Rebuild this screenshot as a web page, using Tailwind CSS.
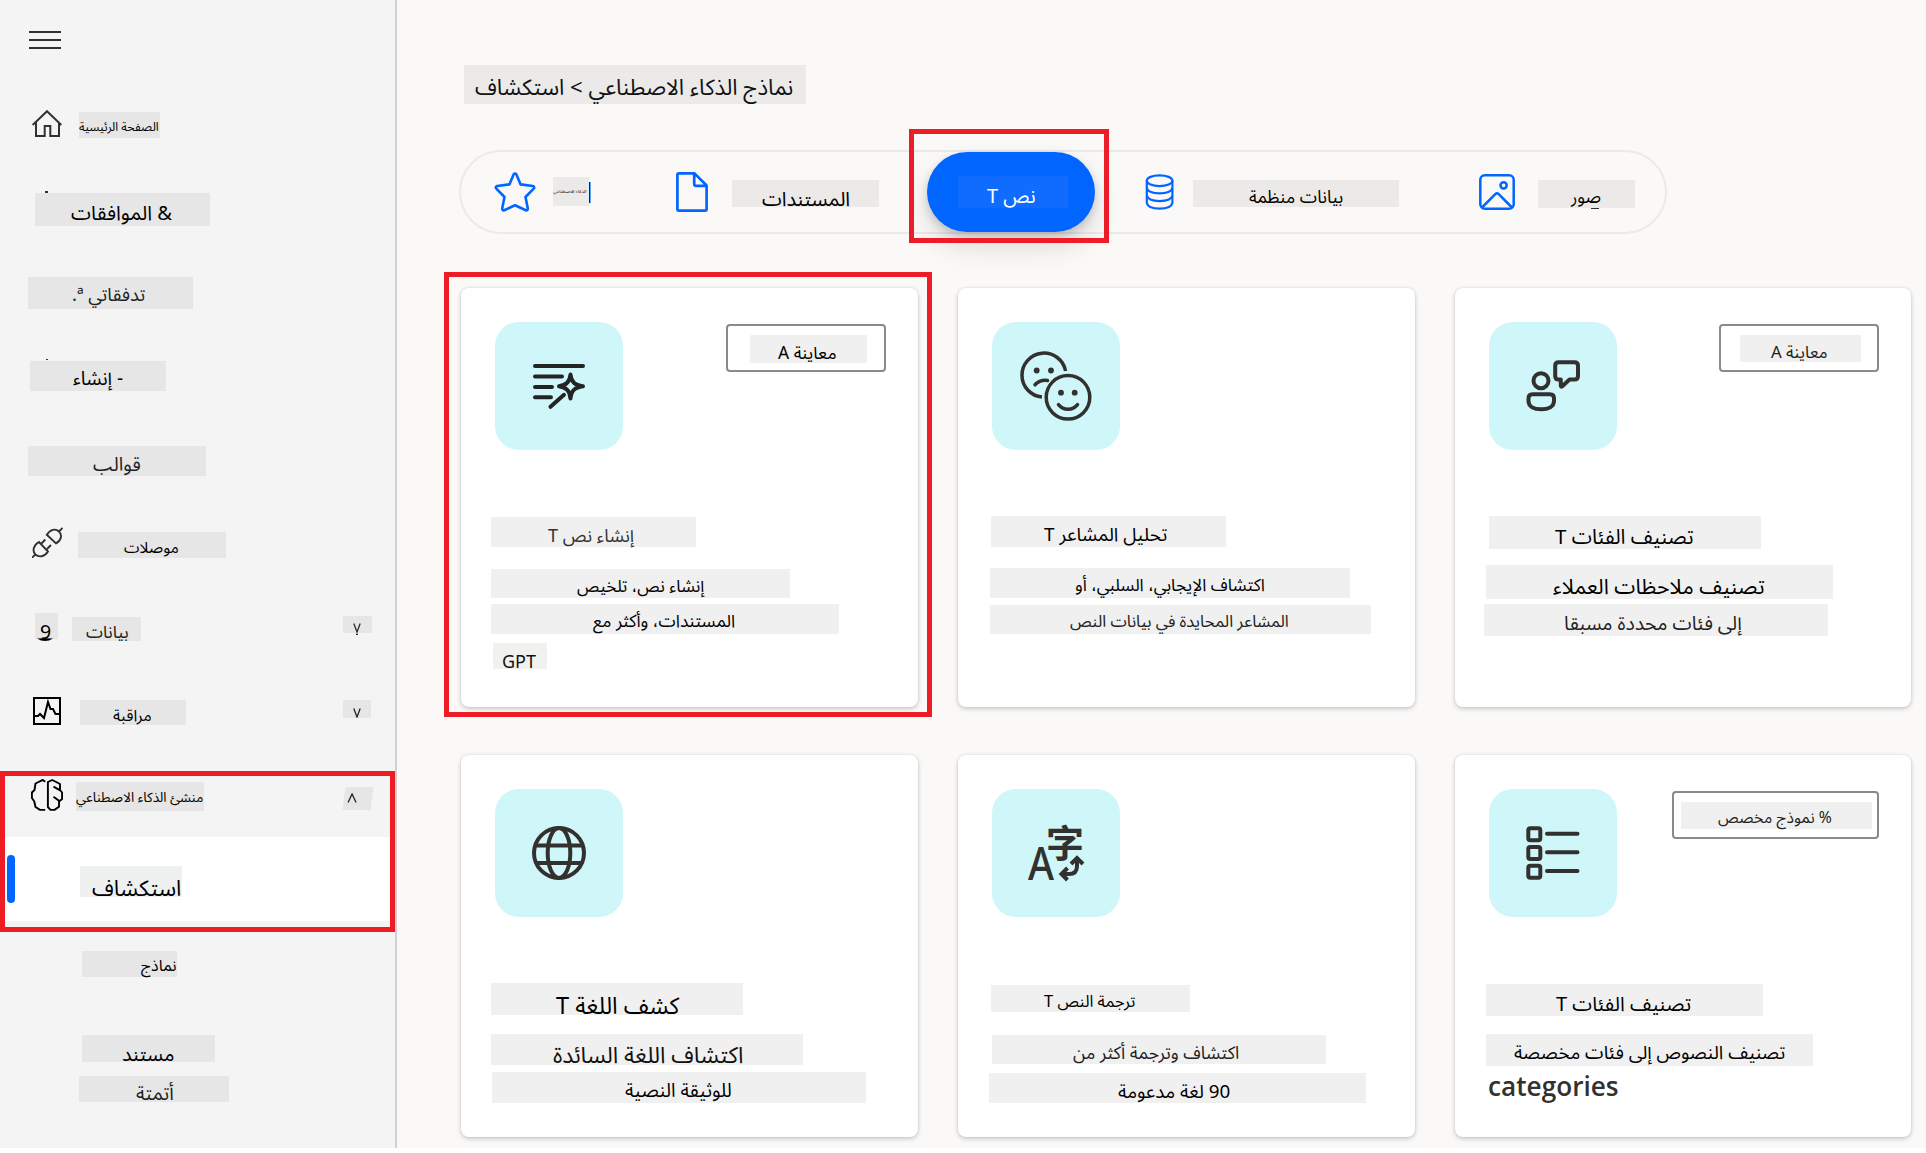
<!DOCTYPE html>
<html lang="ar">
<head>
<meta charset="utf-8">
<title>AI Builder</title>
<script src="https://cdn.jsdelivr.net/npm/@tailwindcss/browser@4"></script>
</head>
<body class="flex h-[1153px] overflow-hidden bg-white font-['Noto_Sans_Arabic','Noto_Sans',sans-serif] leading-none whitespace-nowrap text-black">

<!-- Sidebar -->
<nav class="flex h-[1148px] w-[397px] shrink-0 flex-col items-start border-r-2 border-[#d0d0d0] bg-[#f4f4f4]">
  <div class="mt-[31px] ml-[29px] flex w-8 flex-col gap-1.5">
    <div class="h-0.5 bg-[#323130]"></div><div class="h-0.5 bg-[#323130]"></div><div class="h-0.5 bg-[#323130]"></div>
  </div>

  <div class="mt-[61px] ml-8 flex h-7 items-start">
    <svg class="h-7 w-[30px]" viewBox="32 110 30 28" fill="none" stroke="#323130" stroke-width="2"><path d="M32.6 125 47 111.200 61.400 125M36 122.500V136H44.700V126H50.300V136H59V122.500"/></svg>
    <div class="mt-0.5 ml-[17px] flex h-[26px] w-[81px] bg-[#e6e6e6]"><span dir="rtl" class="mt-[9px] text-[12.2px]">الصفحة الرئيسية</span></div>
  </div>

  <div class="relative mt-[55px] ml-[35px] flex h-[33px] w-[175px] bg-[#e6e6e6] pl-9"><span dir="rtl" class="mt-[11px] text-[20.2px]">&amp; الموافقات</span>
    <i class="absolute -top-0.5 left-2.5 h-0.5 w-[3px] bg-[#323130]"></i></div>
  <div class="mt-[51px] ml-7 flex h-8 w-[165px] bg-[#e6e6e6] pl-[44px]"><span dir="rtl" class="mt-2.5 text-[18.4px] text-[#222]">تدفقاتي ª.</span></div>
  <div class="relative mt-[52px] ml-[30px] flex h-[30px] w-[136px] bg-[#e6e6e6] pl-[43px]"><span dir="rtl" class="mt-[9px] text-[19px]">- إنشاء</span>
    <i class="absolute -top-0.5 left-4 h-px w-0.5 bg-[#323130]"></i></div>
  <div class="mt-[55px] ml-[28px] flex h-[30px] w-[178px] bg-[#e6e6e6] pl-[65px]"><span dir="rtl" class="mt-2.5 text-[19px] text-[#222]">قوالب</span></div>

  <div class="mt-[51px] ml-8 flex h-[31px] items-start">
    <svg class="h-[31px] w-[31px]" viewBox="32 527 31 31" fill="none" stroke="#323130" stroke-width="1.9"><path d="M62.500 528 59 531.500M46.800 534.800 56 543.400C61.200 540.500 62.600 535 59 531.500 55.500 528 50 529.600 46.800 534.800ZM32 557.800 35.400 554.400M39 542 48 551.500C44.500 556.800 39 557.800 35.400 554.400 32 551 33.500 545 39 542ZM41.500 543.500 45.300 539.500M47 549 51 545"/></svg>
    <div class="mt-[5px] ml-[15px] flex h-[26px] w-[148px] bg-[#e6e6e6] pl-[46px]"><span dir="rtl" class="mt-[9px] text-[15.700px]">موصلات</span></div>
  </div>

  <div class="mt-[55px] flex h-7 w-full items-start pl-[35px]">
    <div class="relative flex h-[26px] w-[23px] bg-[#e6e6e6] pl-[5px]"><span class="mt-2.5 text-[19.500px]">9</span>
      <svg class="absolute top-[25px] left-[2px] h-[3px] w-4" viewBox="0 0 16 3"><path d="M0 .5Q8 .2 16 .5 12 3 8 3 4 3 0 .5Z"/></svg></div>
    <div class="mt-1 ml-3.5 flex h-6 w-[69px] bg-[#e6e6e6] pl-3.5"><span dir="rtl" class="mt-[7px] text-[17.200px] text-[#222]">بيانات</span></div>
    <div class="mt-[3px] ml-[202px] flex h-[17px] w-[29px] bg-[#e6e6e6] pl-2.5"><svg class="mt-[7px] h-3 w-2" viewBox="0 0 8 12" fill="none" stroke="#222" stroke-width="1.200"><path d="M.8.500 4 9 7.200.500M3 11.300h2"/></svg></div>
  </div>

  <div class="mt-[56px] flex h-7 w-full items-start pl-[33px]">
    <svg class="h-7 w-7" viewBox="33 697 28 28" fill="none" stroke="#000" stroke-width="2"><path d="M34 698H60V724H34ZM34 716H38L40 714 44 718 48 702 50.500 709H53L55.500 714H60"/></svg>
    <div class="mt-[3px] ml-[19px] flex h-[25px] w-[106px] bg-[#e6e6e6] pl-[33px]"><span dir="rtl" class="mt-2 text-[16px]">مراقبة</span></div>
    <div class="mt-[3px] ml-[157px] flex h-[18px] w-[28px] bg-[#e6e6e6] pl-2.5"><svg class="mt-2 h-2.5 w-2" viewBox="0 0 8 10" fill="none" stroke="#222" stroke-width="1.300"><path d="M.8.500 4 9 7.200.500"/></svg></div>
  </div>

  <div class="mt-[46px] flex h-[161px] w-[395px] flex-col border-[5px] border-[#ee1c25]">
    <div class="mt-[3px] ml-[26px] flex h-8 items-start">
      <svg class="h-8 w-8" viewBox="31 779 32 32" fill="none" stroke="#000" stroke-width="1.900" stroke-linejoin="round"><path d="M45.200 781.800 42.800 779.900 35.500 783.500 34.500 790 31.900 792.500V798L34.300 801.500 35.500 807 40 809.900H45.200M47.900 782V807L50.500 809.900H54.500L59 806.800V801.500L62.100 799V792.500L60 790V784L52.300 780ZM53.500 786.700 60.600 790.700M53.500 796.700 60 801.500"/></svg>
      <div class="mt-[3px] ml-[13px] flex h-[29px] w-32 bg-[#e6e6e6]"><span dir="rtl" class="mt-[9px] text-[13.500px]">منشئ الذكاء الاصطناعي</span></div>
      <div class="mt-2 ml-[140px] flex h-[23px] w-[28px] -skew-x-6 bg-[#e6e6e6] pl-[3px]"><svg class="mt-1.5 h-2.5 w-2.5 skew-x-6" viewBox="0 0 10 10" fill="none" stroke="#222" stroke-width="1.300"><path d="M1 9.500 5 1 9 9.500"/></svg></div>
    </div>
    <div class="mt-[26px] flex h-[84px] items-start bg-white pl-0.5">
      <div class="mt-[18px] h-12 w-2 rounded-full bg-[#0066ff]"></div>
      <div class="mt-[29px] ml-[65px] flex h-[31px] w-[102px] bg-[#eff1f1] pl-3"><span dir="rtl" class="mt-3 text-[22.200px]">استكشاف</span></div>
    </div>
  </div>

  <div class="mt-[19px] ml-[82px] flex h-[26px] w-[95px] bg-[#e6e6e6] pl-[59px]"><span dir="rtl" class="mt-2 text-[15.800px]">نماذج</span></div>
  <div class="mt-[58px] ml-[82px] flex h-[27px] w-[133px] bg-[#e6e6e6] pl-[40px]"><span dir="rtl" class="mt-2.5 text-[20px]">مستند</span></div>
  <div class="mt-3.5 ml-[79px] flex h-[26px] w-[150px] bg-[#e6e6e6] pl-[57px]"><span dir="rtl" class="mt-[9px] text-[19.200px] text-[#222]">أتمتة</span></div>
</nav>

<!-- Content -->
<main class="flex h-[1148px] grow flex-col items-start bg-[#faf9f8] pl-[62px]">
  <div class="mt-[65px] ml-[5px] flex h-[39px] w-[342px] bg-[#ebeae9] pl-[11px]"><span dir="rtl" class="mt-3 text-[22.200px] text-[#111]">نماذج الذكاء الاصطناعي &gt; استكشاف</span></div>

  <!-- Category tabs -->
  <div class="mt-[46px] flex h-[84px] w-[1208px] items-start rounded-full border-2 border-[#ebeae9]">
    <div class="flex items-start pl-8">
      <svg class="mt-[19px] h-[42px] w-[44px]" viewBox="493 171 44 42" fill="none" stroke="#0066ff" stroke-width="2.600" stroke-linejoin="round"><path d="M513.700 174.300Q515 172.600 516.300 174.300L520.600 184.400 532.800 186Q535 186.800 533.700 188.600L525.500 197 527.800 208.500Q527.800 210.800 525.800 210.200L515 205.300 504.200 210.200Q502.200 210.800 502.200 208.500L504.500 197 496.300 188.600Q495 186.800 497.200 186L509.400 184.400Z"/></svg>
      <div class="mt-[25px] ml-4 flex h-[29px] w-9 bg-[#ebeae9]"><span dir="rtl" class="mt-[11px] origin-left scale-y-75 text-[5px]">الذكاء الاصطناعي</span></div>
      <div class="mt-[30px] h-[21px] w-0.5 border-r border-[#55aaff] bg-[#002a55]"></div>
    </div>
    <div class="flex items-start pl-[85px]">
      <svg class="mt-5 h-10 w-8" viewBox="676 172 32 40" fill="none" stroke="#0066ff" stroke-width="2.700" stroke-linejoin="round"><path d="M679 173.400H694.500L706.600 185.500V209Q706.600 210.600 705 210.600H679Q677.400 210.600 677.400 209V175Q677.400 173.400 679 173.400ZM694.200 173.400V184Q694.200 185.800 696 185.800H706.600"/></svg>
      <div class="mt-7 ml-6 flex h-[27px] w-[147px] bg-[#ebeae9] pl-[30px]"><span dir="rtl" class="mt-2.5 text-[20px]">المستندات</span></div>
    </div>
    <div class="relative ml-12 flex h-20 w-[168px] items-start rounded-full bg-[#0066ff] pl-[31px] shadow-[0_4px_8px_rgba(0,0,0,0.16),0_14px_28px_rgba(0,0,0,0.13)]">
      <div class="mt-6 flex h-8 w-[110px] bg-[#0f6cff] pl-[29px]"><span dir="rtl" class="mt-[11px] text-[20px] text-white">نص T</span></div>
      <div class="absolute -top-[23px] -left-[18px] h-[114px] w-[200px] border-[5px] border-[#ee1c25]"></div>
    </div>
    <div class="flex items-start pl-[50px]">
      <svg class="mt-[22px] h-9 w-[29px]" viewBox="1145 174 29 36" fill="none" stroke="#0066ff" stroke-width="2.200"><ellipse cx="1159.600" cy="180.700" rx="12.800" ry="5.400"/><path d="M1146.800 180.700V203Q1148 208.500 1159.600 208.700 1171.200 208.500 1172.400 203V180.700M1146.800 188Q1148 193.200 1159.600 193.400 1171.200 193.200 1172.400 188M1146.800 195.600Q1148 200.900 1159.600 201.100 1171.200 200.900 1172.400 195.600"/></svg>
      <div class="mt-7 ml-[19px] flex h-[27px] w-[206px] bg-[#ebeae9] pl-[56px]"><span dir="rtl" class="mt-[9px] text-[17.500px]">بيانات منظمة</span></div>
    </div>
    <div class="flex items-start pl-20">
      <svg class="mt-[22px] h-9 w-9" viewBox="1479 174 36 36" fill="none" stroke="#0066ff" stroke-width="2.500" stroke-linejoin="round"><rect x="1480.300" y="175.300" width="33.400" height="33.400" rx="4.500"/><circle cx="1503.600" cy="185.300" r="3.100"/><path d="M1482 207.500 1495.300 194.200Q1497 192.600 1498.700 194.200L1512 207.500"/></svg>
      <div class="relative mt-7 ml-[23px] flex h-[28px] w-[97px] bg-[#ebeae9] pl-[33px]"><span dir="rtl" class="mt-[9px] text-[17.200px]">صور</span>
        <i class="absolute top-[28px] left-[53px] h-px w-2 bg-[#323130]"></i></div>
    </div>
  </div>

  <!-- Model cards -->
  <div class="mt-[54px] ml-0.5 grid grid-cols-[457px_457px_456px] grid-rows-[419px_382px] gap-x-10 gap-y-12">

    <section class="relative flex flex-col rounded-lg bg-white pt-[34px] pr-8 pl-[34px] shadow-[0_2px_5px_rgba(0,0,0,0.18),0_0_3px_rgba(0,0,0,0.10)]">
      <div class="flex items-start justify-between">
        <svg class="size-32 rounded-3xl bg-[#cff6f9]" viewBox="0 0 128 128" fill="none" stroke="#242424" stroke-width="4" stroke-linecap="round" stroke-linejoin="round"><path d="M40 44H88M40 54.500H67M40 65H57M40 75.300H56M69 72.800 55.500 84.800"/><path d="M75.500 52.500C76.300 60 79.500 63 88 64.300 79.500 65.600 76.300 68.600 75.500 76.500 74.700 68.600 71.500 65.600 64 64.300 71.500 63 74.700 60 75.500 52.500Z"/><path d="M75.500 60.500 79 64.300 75.500 68 72 64.300Z" fill="#cff6f9" stroke="none"/></svg>
        <div class="mt-0.5 flex h-12 w-40 rounded border-2 border-[#8a8a8a] pl-[22px]"><div class="mt-[9px] flex h-7 w-[117px] bg-[#f0f0f0] pl-7"><span dir="rtl" class="mt-2.5 text-[17.400px]">معاينة A</span></div></div>
      </div>
      <div class="mt-[67px] -ml-1 flex flex-col items-start">
        <div class="flex h-[30px] w-[205px] bg-[#f0f0f0] pl-[57px]"><span dir="rtl" class="mt-2.5 text-[18.100px] text-[#333]">إنشاء نص T</span></div>
        <div class="mt-[22px] flex h-[29px] w-[299px] bg-[#f0f0f0] pl-[86px]"><span dir="rtl" class="mt-2.5 text-[17px]">إنشاء نص، تلخيص</span></div>
        <div class="mt-1.5 flex h-[30px] w-[348px] bg-[#f0f0f0] pl-[102px]"><span dir="rtl" class="mt-[9px] text-[17.400px]">المستندات، وأكثر مع</span></div>
        <div class="mt-[9px] ml-0.5 flex h-[26px] w-[54px] bg-[#f1f1ef] pl-[9px]"><span class="mt-2.5 text-[18px] text-[#111]">GPT</span></div>
      </div>
      <div class="absolute -top-4 -left-[17px] h-[445px] w-[488px] border-[5px] border-[#ee1c25]"></div>
    </section>

    <section class="flex flex-col rounded-lg bg-white pt-[34px] pr-8 pl-[34px] shadow-[0_2px_5px_rgba(0,0,0,0.18),0_0_3px_rgba(0,0,0,0.10)]">
      <svg class="size-32 rounded-3xl bg-[#cff6f9]" viewBox="0 0 128 128" fill="none" stroke="#323130" stroke-width="3.500"><path d="M73.600 49A22 22 0 1 0 50 75"/><circle cx="76" cy="75.300" r="21.800"/><path d="M43 62.800Q48 57.500 55.500 58.500M66.500 82.700C71.500 88.800 80.500 88.800 85.500 82.700" stroke-linecap="round"/><g fill="#323130" stroke="none"><circle cx="44.700" cy="48.500" r="2.900"/><circle cx="59" cy="48.500" r="2.900"/><circle cx="69" cy="70.700" r="2.900"/><circle cx="82.700" cy="70.700" r="2.900"/></g></svg>
      <div class="mt-[66px] -ml-0.5 flex flex-col items-start">
        <div class="ml-px flex h-[31px] w-[235px] bg-[#f0f0f0] pl-[53px]"><span dir="rtl" class="mt-2.5 text-[18.900px]">تحليل المشاعر T</span></div>
        <div class="mt-[21px] flex h-[30px] w-[360px] bg-[#f0f0f0] pl-[85px]"><span dir="rtl" class="mt-[9px] text-[17.200px]">اكتشاف الإيجابي، السلبي، أو</span></div>
        <div class="mt-[7px] flex h-[29px] w-[381px] bg-[#f0f0f0] pl-[80px]"><span dir="rtl" class="mt-[9px] text-[16.500px] text-[#222]">المشاعر المحايدة في بيانات النص</span></div>
      </div>
    </section>

    <section class="flex flex-col rounded-lg bg-white pt-[34px] pr-8 pl-[34px] shadow-[0_2px_5px_rgba(0,0,0,0.18),0_0_3px_rgba(0,0,0,0.10)]">
      <div class="flex items-start justify-between">
        <svg class="size-32 rounded-3xl bg-[#cff6f9]" viewBox="0 0 128 128" fill="none" stroke="#323130" stroke-width="4" stroke-linejoin="round"><circle cx="52" cy="58.700" r="7.500"/><path d="M43.500 72.300H61Q65 72.300 65 76.300V79C65 84.500 59.500 87.300 52.200 87.300S39.500 84.500 39.500 79V76.300Q39.500 72.300 43.500 72.300ZM69.500 40.300H85.500Q89 40.300 89 43.800V54Q89 57.500 85.500 57.500H80.500L73 64.500Q71.800 65 71.800 63.500V57.500H69.500Q66.200 57.500 66.200 54V43.800Q66.200 40.300 69.500 40.300Z"/></svg>
        <div class="mt-0.5 flex h-12 w-40 rounded border-2 border-[#8a8a8a] pl-[19px]"><div class="mt-[9px] flex h-[27px] w-[121px] bg-[#f0f0f0] pl-[31px]"><span dir="rtl" class="mt-2.5 text-[16.800px] text-[#222]">معاينة A</span></div></div>
      </div>
      <div class="mt-[66px] -ml-[5px] flex flex-col items-start">
        <div class="ml-[5px] flex h-[33px] w-[272px] bg-[#f0f0f0] pl-[66px]"><span dir="rtl" class="mt-3 text-[20.500px]">تصنيف الفئات T</span></div>
        <div class="mt-4 ml-0.5 flex h-[34px] w-[347px] bg-[#f0f0f0] pl-[67px]"><span dir="rtl" class="mt-3 text-[21.400px]">تصنيف ملاحظات العملاء</span></div>
        <div class="mt-[5px] flex h-8 w-[344px] bg-[#f0f0f0] pl-[80px]"><span dir="rtl" class="mt-2.5 text-[19.400px] text-[#222]">إلى فئات محددة مسبقا</span></div>
      </div>
    </section>

    <section class="flex flex-col rounded-lg bg-white pt-[34px] pr-8 pl-[34px] shadow-[0_2px_5px_rgba(0,0,0,0.18),0_0_3px_rgba(0,0,0,0.10)]">
      <svg class="size-32 rounded-3xl bg-[#cff6f9]" viewBox="0 0 128 128" fill="none" stroke="#323130" stroke-width="4"><circle cx="64" cy="64" r="25"/><ellipse cx="64" cy="64" rx="11.300" ry="25"/><path d="M40.500 56.500H87.500M40.500 74H87.500"/></svg>
      <div class="mt-[66px] -ml-1 flex flex-col items-start">
        <div class="flex h-8 w-[252px] bg-[#f0f0f0] pl-[65px]"><span dir="rtl" class="mt-3 text-[23.500px]">كشف اللغة T</span></div>
        <div class="mt-[19px] flex h-[31px] w-[312px] bg-[#f0f0f0] pl-[62px]"><span dir="rtl" class="mt-[11px] text-[22.900px] text-[#111]">اكتشاف اللغة السائدة</span></div>
        <div class="mt-[7px] ml-px flex h-[31px] w-[374px] bg-[#f0f0f0] pl-[133px]"><span dir="rtl" class="mt-2.5 text-[19.100px]">للوثيقة النصية</span></div>
      </div>
    </section>

    <section class="flex flex-col rounded-lg bg-white pt-[34px] pr-8 pl-[34px] shadow-[0_2px_5px_rgba(0,0,0,0.18),0_0_3px_rgba(0,0,0,0.10)]">
      <svg class="size-32 rounded-3xl bg-[#cff6f9]" viewBox="0 0 128 128" fill="none" stroke="#323130" stroke-width="4"><g fill="#323130" stroke="none"><text x="54" y="67.500" font-size="38" class="font-['Noto_Sans_CJK_SC',sans-serif] font-bold">字</text><text x="36" y="91" font-size="45" textLength="26" lengthAdjust="spacingAndGlyphs" class="font-['Noto_Sans',sans-serif] font-medium">A</text></g><path d="M85 69V77Q85 85 77 85H69M79 75 85 69 91 75M75.500 79 69.500 85 75.500 91"/></svg>
      <div class="mt-[68px] -ml-[5px] flex flex-col items-start">
        <div class="ml-[4px] flex h-[27px] w-[199px] bg-[#f0f0f0] pl-[53px]"><span dir="rtl" class="mt-[9px] text-[16.400px]">ترجمة النص T</span></div>
        <div class="mt-[23px] ml-[5px] flex h-[29px] w-[334px] bg-[#f0f0f0] pl-[81px]"><span dir="rtl" class="mt-2.5 text-[17.800px] text-[#222]">اكتشاف وترجمة أكثر من</span></div>
        <div class="mt-[9px] ml-0.5 flex h-[30px] w-[377px] bg-[#f0f0f0] pl-[129px]"><span dir="rtl" class="mt-2.5 text-[18.800px]">90 لغة مدعومة</span></div>
      </div>
    </section>

    <section class="flex flex-col rounded-lg bg-white pt-[34px] pr-8 pl-[34px] shadow-[0_2px_5px_rgba(0,0,0,0.18),0_0_3px_rgba(0,0,0,0.10)]">
      <div class="flex items-start justify-between">
        <svg class="size-32 rounded-3xl bg-[#cff6f9]" viewBox="0 0 128 128" fill="none" stroke="#323130" stroke-width="4" stroke-linecap="round"><rect x="39.300" y="39.300" width="12" height="12" rx="2"/><rect x="39.300" y="58" width="12" height="12" rx="2"/><rect x="39.300" y="76.700" width="12" height="12" rx="2"/><path d="M58 44.800H88.500M58 63.300H88.500M58 82H88.500"/></svg>
        <div class="mt-0.5 flex h-12 w-[207px] rounded border-2 border-[#8a8a8a] pl-[7px]"><div class="mt-[9px] flex h-[27px] w-[191px] bg-[#f0f0f0] pl-[37px]"><span dir="rtl" class="mt-[9px] text-[15.700px] text-[#222]">% نموذج مخصص</span></div></div>
      </div>
      <div class="mt-[67px] -ml-[3px] flex flex-col items-start">
        <div class="flex h-8 w-[277px] bg-[#f0f0f0] pl-[70px]"><span dir="rtl" class="mt-[11px] text-[20px]">تصنيف الفئات T</span></div>
        <div class="mt-[18px] flex h-8 w-[327px] bg-[#f0f0f0] pl-7"><span dir="rtl" class="mt-2.5 text-[18.700px]">تصنيف النصوص إلى فئات مخصصة</span></div>
        <span class="mt-[7px] ml-[2px] font-['Open_Sans',sans-serif] text-[26.200px] font-semibold text-[#323130]">categories</span>
      </div>
    </section>
  </div>
</main>
</body>
</html>
